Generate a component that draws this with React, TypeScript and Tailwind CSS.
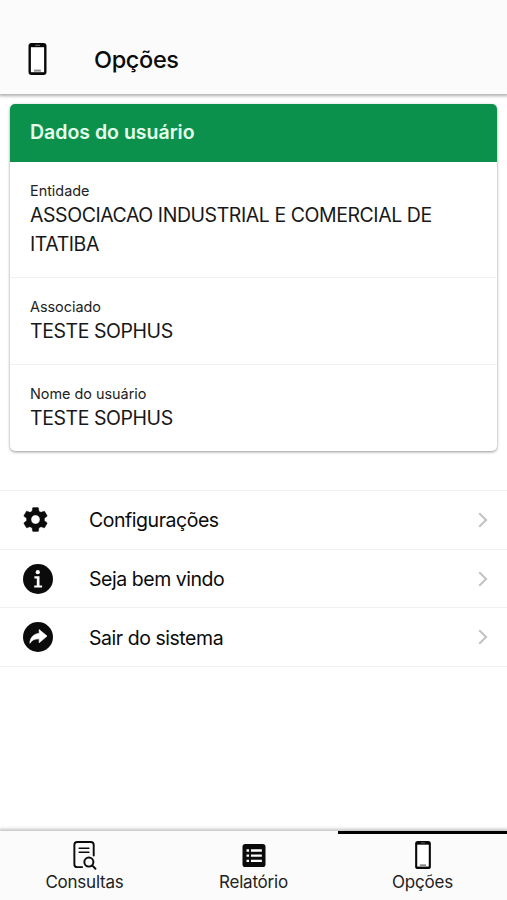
import type { ReactNode } from "react";
import clsx from "clsx";

interface IconProps {
  className?: string;
}

interface UserField {
  label: string;
  value: string;
}

interface MenuItem {
  label: string;
  icon: ReactNode;
}

interface Tab {
  label: string;
  icon: ReactNode;
  active?: boolean;
}

function PhoneIcon({ className }: IconProps) {
  return (
    <svg viewBox="0 0 18 32" className={className} aria-hidden="true">
      <rect x="0" y="0" width="18" height="32" rx="3" fill="#080808" />
      <rect x="2.4" y="4.2" width="13.2" height="25" fill="#fff" />
      <rect x="6.5" y="1.7" width="5" height="1" rx="0.5" fill="#777" />
      <rect x="5.4" y="26.6" width="7" height="2" fill="#8c8c8c" />
    </svg>
  );
}

function GearIcon({ className }: IconProps) {
  return (
    <svg viewBox="2.2 2 19.6 20" className={className} fill="currentColor" aria-hidden="true">
      <path
        d="M19.14 12.94c.04-.3.06-.61.06-.94 0-.32-.02-.64-.07-.94l2.03-1.58c.18-.14.23-.41.12-.61l-1.92-3.32c-.12-.22-.37-.29-.59-.22l-2.39.96c-.5-.38-1.03-.7-1.62-.94l-.36-2.54c-.04-.24-.24-.41-.48-.41h-3.84c-.24 0-.43.17-.47.41l-.36 2.54c-.59.24-1.13.57-1.62.94l-2.39-.96c-.22-.08-.47 0-.59.22L2.74 8.87c-.12.21-.08.47.12.61l2.03 1.58c-.05.3-.09.63-.09.94s.02.64.07.94l-2.03 1.58c-.18.14-.23.41-.12.61l1.92 3.32c.12.22.37.29.59.22l2.39-.96c.5.38 1.03.7 1.62.94l.36 2.54c.05.24.24.41.48.41h3.84c.24 0 .44-.17.47-.41l.36-2.54c.59-.24 1.13-.56 1.62-.94l2.39.96c.22.08.47 0 .59-.22l1.92-3.32c.12-.22.07-.47-.12-.61zM12 15.6a3.6 3.6 0 1 1 0-7.2 3.6 3.6 0 0 1 0 7.2z"
        stroke="currentColor"
        strokeWidth="0.3"
      />
    </svg>
  );
}

function InfoIcon({ className }: IconProps) {
  return (
    <svg viewBox="0 0 30 30" className={className} aria-hidden="true">
      <circle cx="15" cy="15" r="15" fill="currentColor" />
      <circle cx="14.8" cy="8.2" r="2.1" fill="#fff" />
      <path d="M11.4 12.2h5.1v9.2h2.6v2.2h-7.9v-2.2h2.6v-7h-2.4z" fill="#fff" />
    </svg>
  );
}

function ShareIcon({ className }: IconProps) {
  return (
    <svg viewBox="0 0 30 30" className={className} aria-hidden="true">
      <circle cx="15" cy="15" r="15" fill="currentColor" />
      <path
        d="M16.2 7.6 24 14.1l-7.8 6.6v-3.9c-4.6-.1-7.4 1.3-9.3 4.5.2-5.6 3.4-9.3 9.3-9.9z"
        fill="#fff"
        stroke="#fff"
        strokeWidth="0.7"
        strokeLinejoin="round"
      />
    </svg>
  );
}

function SearchDocIcon({ className }: IconProps) {
  return (
    <svg
      viewBox="0 0 24 30"
      className={className}
      fill="none"
      stroke="currentColor"
      strokeWidth="2"
      strokeLinecap="round"
      aria-hidden="true"
    >
      <path d="M9 27H4a3 3 0 0 1-3-3V4a3 3 0 0 1 3-3h14a3 3 0 0 1 3 3v11" />
      <path d="M6 7.4h10M6 11.6h10" strokeWidth="1.6" />
      <circle cx="16" cy="21.8" r="4.7" />
      <path d="m19.5 25.2 3.3 3.5" />
    </svg>
  );
}

function ListIcon({ className }: IconProps) {
  return (
    <svg viewBox="0 0 24 24" className={className} aria-hidden="true">
      <rect width="24" height="24" rx="3" fill="currentColor" />
      <path
        d="M4.2 6.8h2.6M4.2 12.2h2.6M4.2 17.6h2.6M8.8 6.8H20.2M8.8 12.2H20.2M8.8 17.6H20.2"
        stroke="#fff"
        strokeWidth="2.4"
      />
    </svg>
  );
}

function ChevronIcon({ className }: IconProps) {
  return (
    <svg viewBox="0 0 10 16" className={className} fill="none" aria-hidden="true">
      <path d="m1.2 1.2 6.9 6.8-6.9 6.8" stroke="currentColor" strokeWidth="2" />
    </svg>
  );
}

const userFields: UserField[] = [
  { label: "Entidade", value: "ASSOCIACAO INDUSTRIAL E COMERCIAL DE ITATIBA" },
  { label: "Associado", value: "TESTE SOPHUS" },
  { label: "Nome do usuário", value: "TESTE SOPHUS" },
];

const menuItems: MenuItem[] = [
  { label: "Configurações", icon: <GearIcon className="h-[25px] w-[25px]" /> },
  { label: "Seja bem vindo", icon: <InfoIcon className="h-[30px] w-[30px]" /> },
  { label: "Sair do sistema", icon: <ShareIcon className="h-[30px] w-[30px]" /> },
];

const tabs: Tab[] = [
  { label: "Consultas", icon: <SearchDocIcon className="h-[29px] w-6" /> },
  { label: "Relatório", icon: <ListIcon className="h-[23px] w-6" /> },
  { label: "Opções", icon: <PhoneIcon className="h-7 w-4" />, active: true },
];

function Header() {
  return (
    <header className="relative z-10 flex h-[94px] shrink-0 items-end bg-[#fbfbfb] pb-[17px] pl-7 shadow-[0_1px_3px_1px_rgba(0,0,0,0.32)]">
      <PhoneIcon className="mb-[2px] h-8 w-[19px]" />
      <h1 className="ml-[47px] text-[23.5px] leading-[34px] font-medium tracking-[-0.35px]">
        Opções
      </h1>
    </header>
  );
}

function UserCard() {
  return (
    <section className="mx-[10px] mt-[10px] shrink-0 overflow-hidden rounded-[5px] bg-white shadow-[0_1px_3px_rgba(0,0,0,0.42)]">
      <h2 className="flex h-[58px] items-center bg-[#0b914b] pl-5 text-[19.5px] font-semibold text-[#e6ffed]">
        Dados do usuário
      </h2>
      {userFields.map((field, index) => (
        <div
          key={field.label}
          className={clsx("px-5 pt-[19px] pb-[18px]", index > 0 && "border-t border-[#f1f1f1]")}
        >
          <p className="text-[14.4px] leading-5 text-[#222]">{field.label}</p>
          <p className="text-[19.5px] leading-[29px] tracking-[-0.44px] text-[#181818]">
            {field.value}
          </p>
        </div>
      ))}
    </section>
  );
}

function Menu() {
  return (
    <ul className="mt-[39px] border-t border-[#f1f1f1]">
      {menuItems.map((item) => (
        <li
          key={item.label}
          className="flex h-[58.7px] items-center border-b border-[#f1f1f1] pr-[19px] pl-[22.5px]"
        >
          <span className="flex w-[66.5px] items-center">{item.icon}</span>
          <span className="flex-1 pt-[2px] text-[19.5px] tracking-[-0.46px]">{item.label}</span>
          <ChevronIcon className="h-4 w-[10px] text-[#c2c2c2]" />
        </li>
      ))}
    </ul>
  );
}

function TabBar() {
  return (
    <nav className="relative grid h-[69px] shrink-0 grid-cols-3 bg-[#fbfbfb] shadow-[0_-1px_3px_1px_rgba(0,0,0,0.24)]">
      {tabs.map((tab) => (
        <button
          key={tab.label}
          className={clsx(
            "flex flex-col items-center border-t-[3px] pt-[6px]",
            tab.active ? "border-black" : "border-transparent"
          )}
        >
          <span className="flex h-[30px] items-center">{tab.icon}</span>
          <span className="text-[17px] leading-6 tracking-[-0.22px] text-[#222]">{tab.label}</span>
        </button>
      ))}
    </nav>
  );
}

export default function App() {
  return (
    <div className="flex h-screen flex-col overflow-hidden bg-white font-['Inter','Liberation_Sans',sans-serif] text-[#0b0b0b]">
      <Header />
      <main className="flex-1">
        <UserCard />
        <Menu />
      </main>
      <TabBar />
    </div>
  );
}
